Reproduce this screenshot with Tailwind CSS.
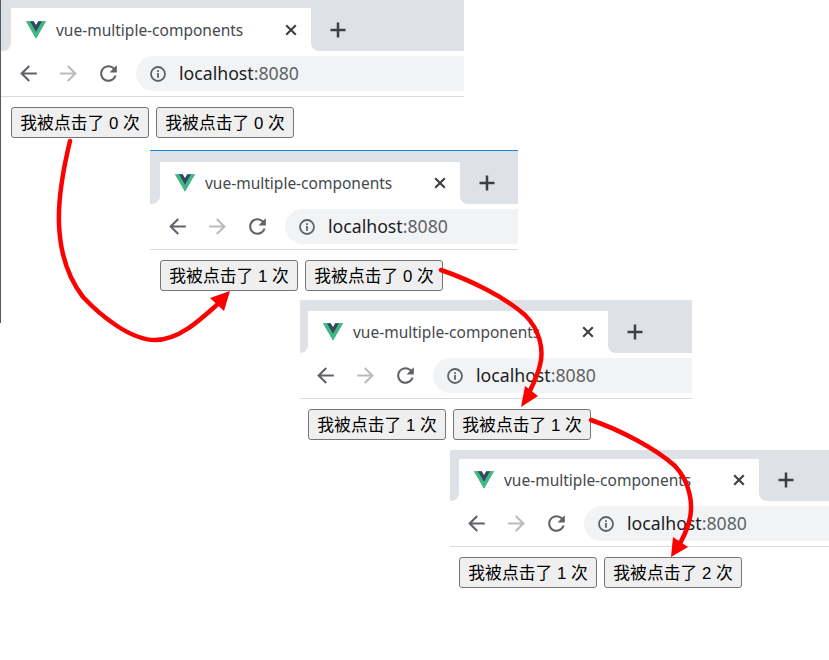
<!DOCTYPE html>
<html lang="zh">
<head>
  <meta charset="UTF-8">
  <title>vue-multiple-components</title>
  <script src="https://cdn.jsdelivr.net/npm/@tailwindcss/browser@4"></script>
</head>
<body class="bg-white">
  <!-- shared icons -->
  <svg class="hidden">
    <symbol id="vue" viewBox="0 0 256 221">
      <path fill="#41B883" d="M204.8 0H256L128 220.8 0 0h97.92L128 51.2 157.44 0h47.36z"/>
      <path fill="#41B883" d="M0 0l128 220.8L256 0h-51.2L128 132.48 50.56 0H0z"/>
      <path fill="#35495E" d="M50.56 0L128 133.12 204.8 0h-47.36L128 51.2 97.92 0H50.56z"/>
    </symbol>
    <symbol id="close" viewBox="0 0 12 12">
      <path d="M1.2 1.2l9.6 9.6M10.8 1.2l-9.6 9.6" stroke="#3c4043" stroke-width="2.1" fill="none"/>
    </symbol>
    <symbol id="plus" viewBox="0 0 16 16">
      <path d="M8 .5v15M.5 8h15" stroke="#3c4043" stroke-width="2.5" fill="none"/>
    </symbol>
    <symbol id="back" viewBox="0 0 24 24">
      <path d="M20 11H7.83l5.59-5.59L12 4l-8 8 8 8 1.41-1.41L7.83 13H20v-2z"/>
    </symbol>
    <symbol id="forward" viewBox="0 0 24 24">
      <path d="M4 11h12.17l-5.59-5.59L12 4l8 8-8 8-1.41-1.41L16.17 13H4v-2z"/>
    </symbol>
    <symbol id="reload" viewBox="0 0 24 24">
      <path d="M17.65 6.35C16.2 4.9 14.21 4 12 4c-4.42 0-7.99 3.58-7.99 8s3.57 8 7.99 8c3.73 0 6.84-2.55 7.73-6h-2.08c-.82 2.33-3.04 4-5.65 4-3.31 0-6-2.69-6-6s2.69-6 6-6c1.66 0 3.14.69 4.22 1.78L13 11h7V4l-2.35 2.35z"/>
    </symbol>
    <symbol id="info" viewBox="0 0 16 16">
      <circle cx="8" cy="8" r="7" fill="none" stroke="#5f6368" stroke-width="1.8"/>
      <rect x="7.1" y="7" width="1.8" height="4.8" fill="#5f6368"/>
      <rect x="7.1" y="4.2" width="1.8" height="1.8" fill="#5f6368"/>
    </symbol>
  </svg>

  <main class="relative w-[829px] h-[660px] overflow-hidden font-['Liberation_Sans','Noto_Sans_CJK_SC',sans-serif]">
    <!-- window 1 -->
    <section class="absolute left-0 top-0 w-[464px] bg-white">
      <div class="h-[8px] bg-[#dee1e6]"></div>
      <div class="flex h-[43px] bg-white">
        <div class="w-[11px] bg-[#dee1e6] rounded-br-lg"></div>
        <div class="w-[300px] flex items-center bg-white rounded-t-xl pl-[15px] pr-[14px]">
          <svg class="w-[20px] h-[18px] mr-[10px]"><use href="#vue"/></svg>
          <span class="flex-1 pt-[3px] text-[15.5px] leading-none text-[#45494d] font-['Noto_Sans']">vue-multiple-components</span>
          <svg class="w-[12px] h-[12px]"><use href="#close"/></svg>
        </div>
        <div class="flex-1 flex items-center bg-[#dee1e6] rounded-bl-lg pl-[19px]">
          <svg class="w-[16px] h-[16px]"><use href="#plus"/></svg>
        </div>
      </div>
      <div class="flex items-center h-[46px] pl-[16px] border-b border-[#dadce0]">
        <svg class="w-[25px] h-[25px] fill-[#5f6368]"><use href="#back"/></svg>
        <svg class="w-[25px] h-[25px] ml-[15px] fill-[#b9bbbe]"><use href="#forward"/></svg>
        <svg class="w-[25px] h-[25px] ml-[15px] fill-[#5f6368]"><use href="#reload"/></svg>
        <div class="flex-1 flex items-center h-[35px] ml-[15px] pl-[14px] rounded-l-full bg-[#f1f3f4]">
          <svg class="w-[16px] h-[16px] mr-[13px]"><use href="#info"/></svg>
          <span class="text-[17.7px] text-[#202124] font-['Noto_Sans']">localhost<span class="text-[#5f6368]">:8080</span></span>
        </div>
      </div>
      <div class="flex gap-[7px] pt-[10px] pl-[11px]">
        <button class="w-[138px] h-[31px] pt-[2px] bg-[#efefef] border border-[#767676] rounded-[3px] text-[16.8px] text-black whitespace-nowrap">我被点击了 0 次</button>
        <button class="w-[138px] h-[31px] pt-[2px] bg-[#efefef] border border-[#767676] rounded-[3px] text-[16.8px] text-black whitespace-nowrap">我被点击了 0 次</button>
      </div>
    </section>
    <div class="absolute left-0 top-0 w-px h-[323px] bg-[#555a60]"></div>

    <!-- window 2 -->
    <section class="absolute left-[150px] top-[150px] w-[368px] bg-white border-t border-[#1a88e0]">
      <div class="h-[11px] bg-[#dee1e6]"></div>
      <div class="flex h-[42px] bg-white">
        <div class="w-[10px] bg-[#dee1e6] rounded-br-lg"></div>
        <div class="w-[300px] flex items-center bg-white rounded-t-xl pl-[15px] pr-[14px]">
          <svg class="w-[20px] h-[18px] mr-[10px]"><use href="#vue"/></svg>
          <span class="flex-1 pt-[2px] text-[15.5px] leading-none text-[#45494d] font-['Noto_Sans']">vue-multiple-components</span>
          <svg class="w-[12px] h-[12px]"><use href="#close"/></svg>
        </div>
        <div class="flex-1 flex items-center bg-[#dee1e6] rounded-bl-lg pl-[19px]">
          <svg class="w-[16px] h-[16px]"><use href="#plus"/></svg>
        </div>
      </div>
      <div class="flex items-center h-[46px] pl-[15px] border-b border-[#dadce0]">
        <svg class="w-[25px] h-[25px] fill-[#5f6368]"><use href="#back"/></svg>
        <svg class="w-[25px] h-[25px] ml-[15px] fill-[#b9bbbe]"><use href="#forward"/></svg>
        <svg class="w-[25px] h-[25px] ml-[15px] fill-[#5f6368]"><use href="#reload"/></svg>
        <div class="flex-1 flex items-center h-[35px] ml-[15px] pl-[14px] rounded-l-full bg-[#f1f3f4]">
          <svg class="w-[16px] h-[16px] mr-[13px]"><use href="#info"/></svg>
          <span class="text-[17.7px] text-[#202124] font-['Noto_Sans']">localhost<span class="text-[#5f6368]">:8080</span></span>
        </div>
      </div>
      <div class="flex gap-[7px] pt-[10px] pl-[10px]">
        <button class="w-[138px] h-[31px] pt-[2px] bg-[#efefef] border border-[#767676] rounded-[3px] text-[16.8px] text-black whitespace-nowrap">我被点击了 1 次</button>
        <button class="w-[138px] h-[31px] pt-[2px] bg-[#efefef] border border-[#767676] rounded-[3px] text-[16.8px] text-black whitespace-nowrap">我被点击了 0 次</button>
      </div>
    </section>

    <!-- window 3 -->
    <section class="absolute left-[300px] top-[300px] w-[392px] bg-white">
      <div class="h-[11px] bg-[#dee1e6]"></div>
      <div class="flex h-[42px] bg-white">
        <div class="w-[8px] bg-[#dee1e6] rounded-br-lg"></div>
        <div class="w-[300px] flex items-center bg-white rounded-t-xl pl-[15px] pr-[14px]">
          <svg class="w-[20px] h-[18px] mr-[10px]"><use href="#vue"/></svg>
          <span class="flex-1 pt-[2px] text-[15.5px] leading-none text-[#45494d] font-['Noto_Sans']">vue-multiple-components</span>
          <svg class="w-[12px] h-[12px]"><use href="#close"/></svg>
        </div>
        <div class="flex-1 flex items-center bg-[#dee1e6] rounded-bl-lg pl-[19px]">
          <svg class="w-[16px] h-[16px]"><use href="#plus"/></svg>
        </div>
      </div>
      <div class="flex items-center h-[46px] pl-[13px] border-b border-[#dadce0]">
        <svg class="w-[25px] h-[25px] fill-[#5f6368]"><use href="#back"/></svg>
        <svg class="w-[25px] h-[25px] ml-[15px] fill-[#b9bbbe]"><use href="#forward"/></svg>
        <svg class="w-[25px] h-[25px] ml-[15px] fill-[#5f6368]"><use href="#reload"/></svg>
        <div class="flex-1 flex items-center h-[35px] ml-[15px] pl-[14px] rounded-l-full bg-[#f1f3f4]">
          <svg class="w-[16px] h-[16px] mr-[13px]"><use href="#info"/></svg>
          <span class="text-[17.7px] text-[#202124] font-['Noto_Sans']">localhost<span class="text-[#5f6368]">:8080</span></span>
        </div>
      </div>
      <div class="flex gap-[7px] pt-[10px] pl-[8px]">
        <button class="w-[138px] h-[31px] pt-[2px] bg-[#efefef] border border-[#767676] rounded-[3px] text-[16.8px] text-black whitespace-nowrap">我被点击了 1 次</button>
        <button class="w-[138px] h-[31px] pt-[2px] bg-[#efefef] border border-[#767676] rounded-[3px] text-[16.8px] text-black whitespace-nowrap">我被点击了 1 次</button>
      </div>
    </section>

    <!-- window 4 -->
    <section class="absolute left-[450px] top-[450px] w-[379px] bg-white">
      <div class="h-[9px] bg-[#dee1e6]"></div>
      <div class="flex h-[42px] bg-white">
        <div class="w-[9px] bg-[#dee1e6] rounded-br-lg"></div>
        <div class="w-[300px] flex items-center bg-white rounded-t-xl pl-[15px] pr-[14px]">
          <svg class="w-[20px] h-[18px] mr-[10px]"><use href="#vue"/></svg>
          <span class="flex-1 pt-[2px] text-[15.5px] leading-none text-[#45494d] font-['Noto_Sans']">vue-multiple-components</span>
          <svg class="w-[12px] h-[12px]"><use href="#close"/></svg>
        </div>
        <div class="flex-1 flex items-center bg-[#dee1e6] rounded-bl-lg pl-[19px]">
          <svg class="w-[16px] h-[16px]"><use href="#plus"/></svg>
        </div>
      </div>
      <div class="flex items-center h-[46px] pl-[14px] border-b border-[#dadce0]">
        <svg class="w-[25px] h-[25px] fill-[#5f6368]"><use href="#back"/></svg>
        <svg class="w-[25px] h-[25px] ml-[15px] fill-[#b9bbbe]"><use href="#forward"/></svg>
        <svg class="w-[25px] h-[25px] ml-[15px] fill-[#5f6368]"><use href="#reload"/></svg>
        <div class="flex-1 flex items-center h-[35px] ml-[15px] pl-[14px] rounded-l-full bg-[#f1f3f4]">
          <svg class="w-[16px] h-[16px] mr-[13px]"><use href="#info"/></svg>
          <span class="text-[17.7px] text-[#202124] font-['Noto_Sans']">localhost<span class="text-[#5f6368]">:8080</span></span>
        </div>
      </div>
      <div class="flex gap-[7px] pt-[10px] pl-[9px]">
        <button class="w-[138px] h-[31px] pt-[2px] bg-[#efefef] border border-[#767676] rounded-[3px] text-[16.8px] text-black whitespace-nowrap">我被点击了 1 次</button>
        <button class="w-[138px] h-[31px] pt-[2px] bg-[#efefef] border border-[#767676] rounded-[3px] text-[16.8px] text-black whitespace-nowrap">我被点击了 2 次</button>
      </div>
    </section>

    <!-- red arrows drawn over the windows -->
    <svg class="absolute left-0 top-0 w-[829px] h-[660px] pointer-events-none" viewBox="0 0 829 660">
      <g fill="none" stroke="#fe0000" stroke-width="4.5" stroke-linecap="round">
        <path d="M70 141C63 170 58 200 59 224C60 250 66 275 83 297C100 315 130 340 155 340C178 340 198 322 219 303"/>
        <path d="M441 270C470 280 505 297 525 315C540 330 544 350 540 365C537 378 531 388 527 397"/>
        <path d="M591 420C620 430 655 448 675 466C690 482 694 505 689 522C686 533 682 540 678 547"/>
      </g>
      <g fill="#fe0000">
        <path d="M230 291L210 298L224 311Z"/>
        <path d="M521 407L538 396L525 386Z"/>
        <path d="M671 557L688 547L673 537Z"/>
      </g>
    </svg>
  </main>
</body>
</html>
